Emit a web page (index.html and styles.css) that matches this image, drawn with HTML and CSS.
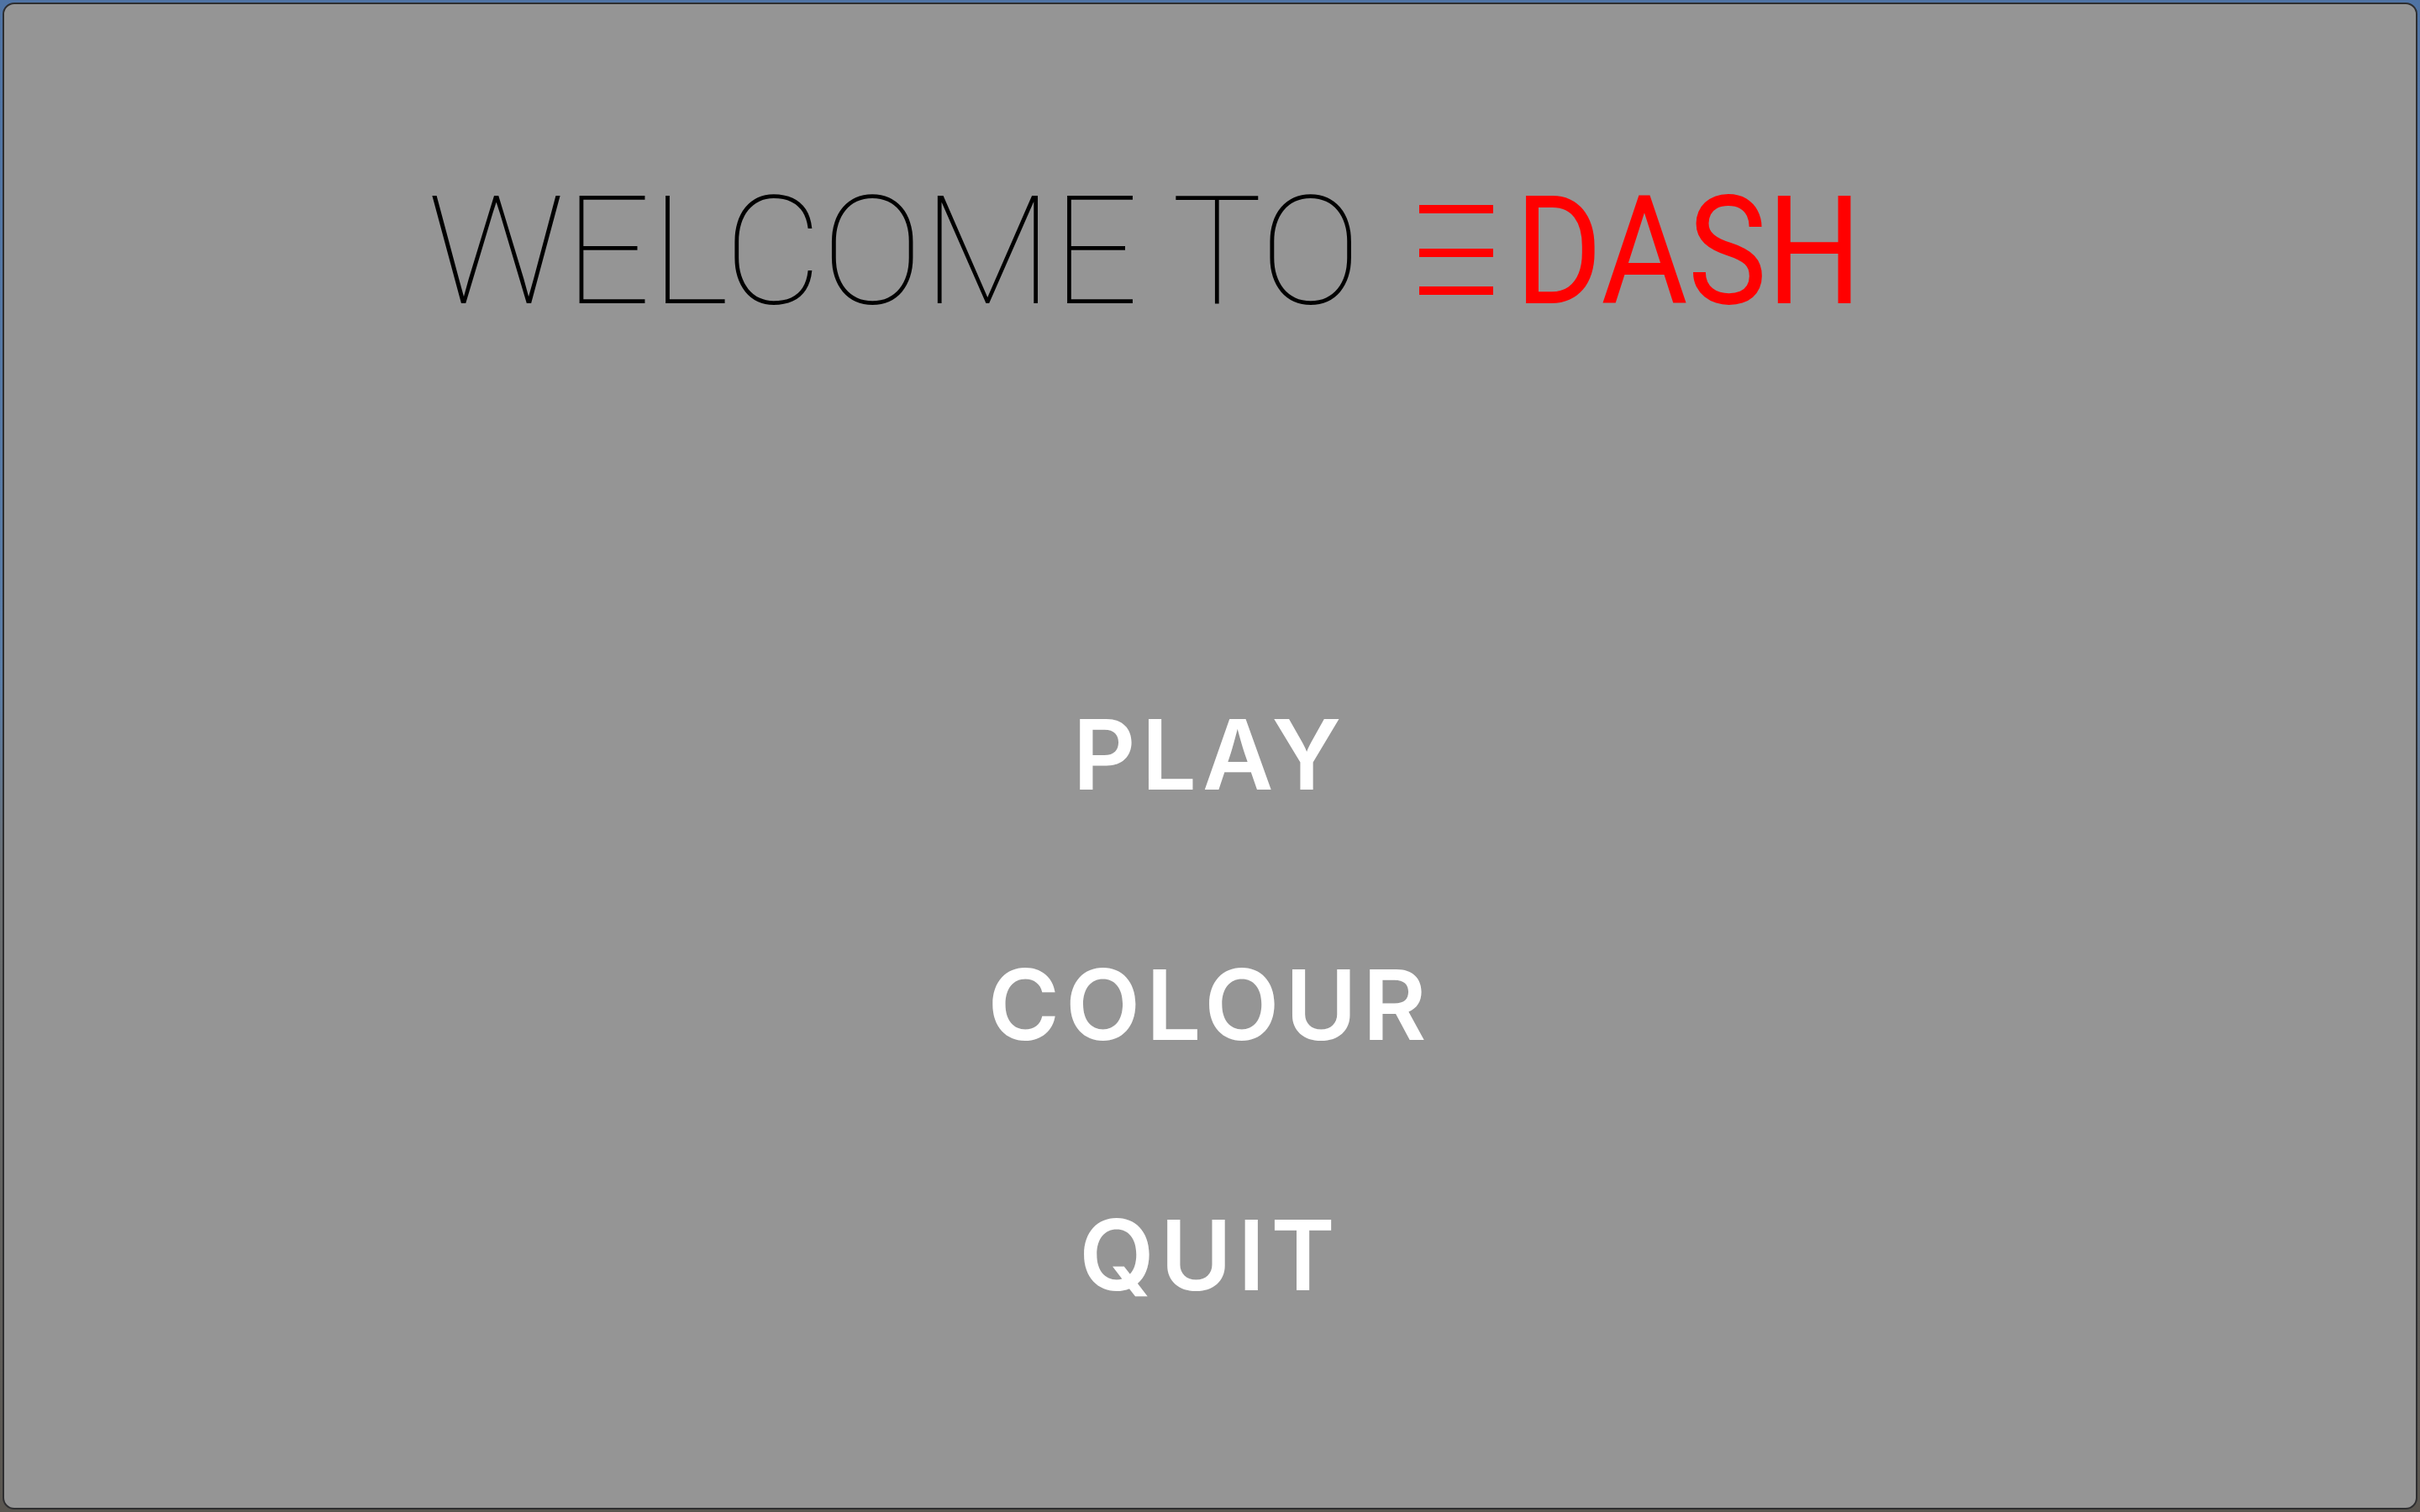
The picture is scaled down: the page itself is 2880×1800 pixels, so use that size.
FILE: index.html
```html
<!DOCTYPE html>
<html lang="en">
<head>
<meta charset="utf-8">
<title>Dash</title>
<link rel="stylesheet" href="styles.css">
</head>
<body>
<div class="screen">
  <main class="panel">
    <h1 class="title"><span class="welcome">WELCOME TO</span><svg class="brand-icon" viewBox="0 0 88 107" aria-hidden="true"><rect x="0" y="0" width="88" height="10" fill="#ff0000"/><rect x="0" y="52" width="88" height="10" fill="#ff0000"/><rect x="0" y="97" width="88" height="10" fill="#ff0000"/></svg><span class="brand-name">DASH</span></h1>
    <nav class="menu">
      <button class="menu-item">PLAY</button>
      <button class="menu-item">COLOUR</button>
      <button class="menu-item">QUIT</button>
    </nav>
  </main>
</div>
</body>
</html>
```
FILE: styles.css
```css
html, body {
  margin: 0;
  padding: 0;
  height: 100%;
}

body {
  background: linear-gradient(180deg, #4f73a4 0%, #5b7ea8 45%, #6b6e70 58%, #5a5650 100%);
  font-family: Roboto, "Liberation Sans", sans-serif;
}

.screen {
  height: 100vh;
  padding: 3px;
  box-sizing: border-box;
  display: flex;
}

.panel {
  flex: 1;
  background: #959595;
  border: 2px solid #2e2e30;
  border-radius: 14px;
  box-sizing: border-box;
  display: flex;
  flex-direction: column;
  align-items: center;
}

.title {
  align-self: flex-start;
  margin: 205px 0 0 504px;
  font-family: Roboto, sans-serif;
  font-size: 180px;
  line-height: 1;
  font-weight: 100;
  color: #000;
  white-space: nowrap;
}

.welcome {
  font-weight: 100;
}

.brand-icon {
  display: inline-block;
  width: 88px;
  height: 107px;
  margin-left: 69px;
  margin-right: 26px;
  vertical-align: 10px;
}

.brand-name {
  display: inline-block;
  color: #ff0000;
  font-weight: 400;
  transform: scaleX(0.88);
  transform-origin: left center;
}

.menu {
  margin-top: 450px;
  display: flex;
  flex-direction: column;
  align-items: center;
  gap: 182px;
}

.menu-item {
  background: none;
  border: none;
  padding: 0;
  font-family: Inter, Roboto, sans-serif;
  font-weight: 600;
  font-size: 116px;
  line-height: 1;
  letter-spacing: 0.06em;
  color: #ffffff;
  cursor: pointer;
}
```
